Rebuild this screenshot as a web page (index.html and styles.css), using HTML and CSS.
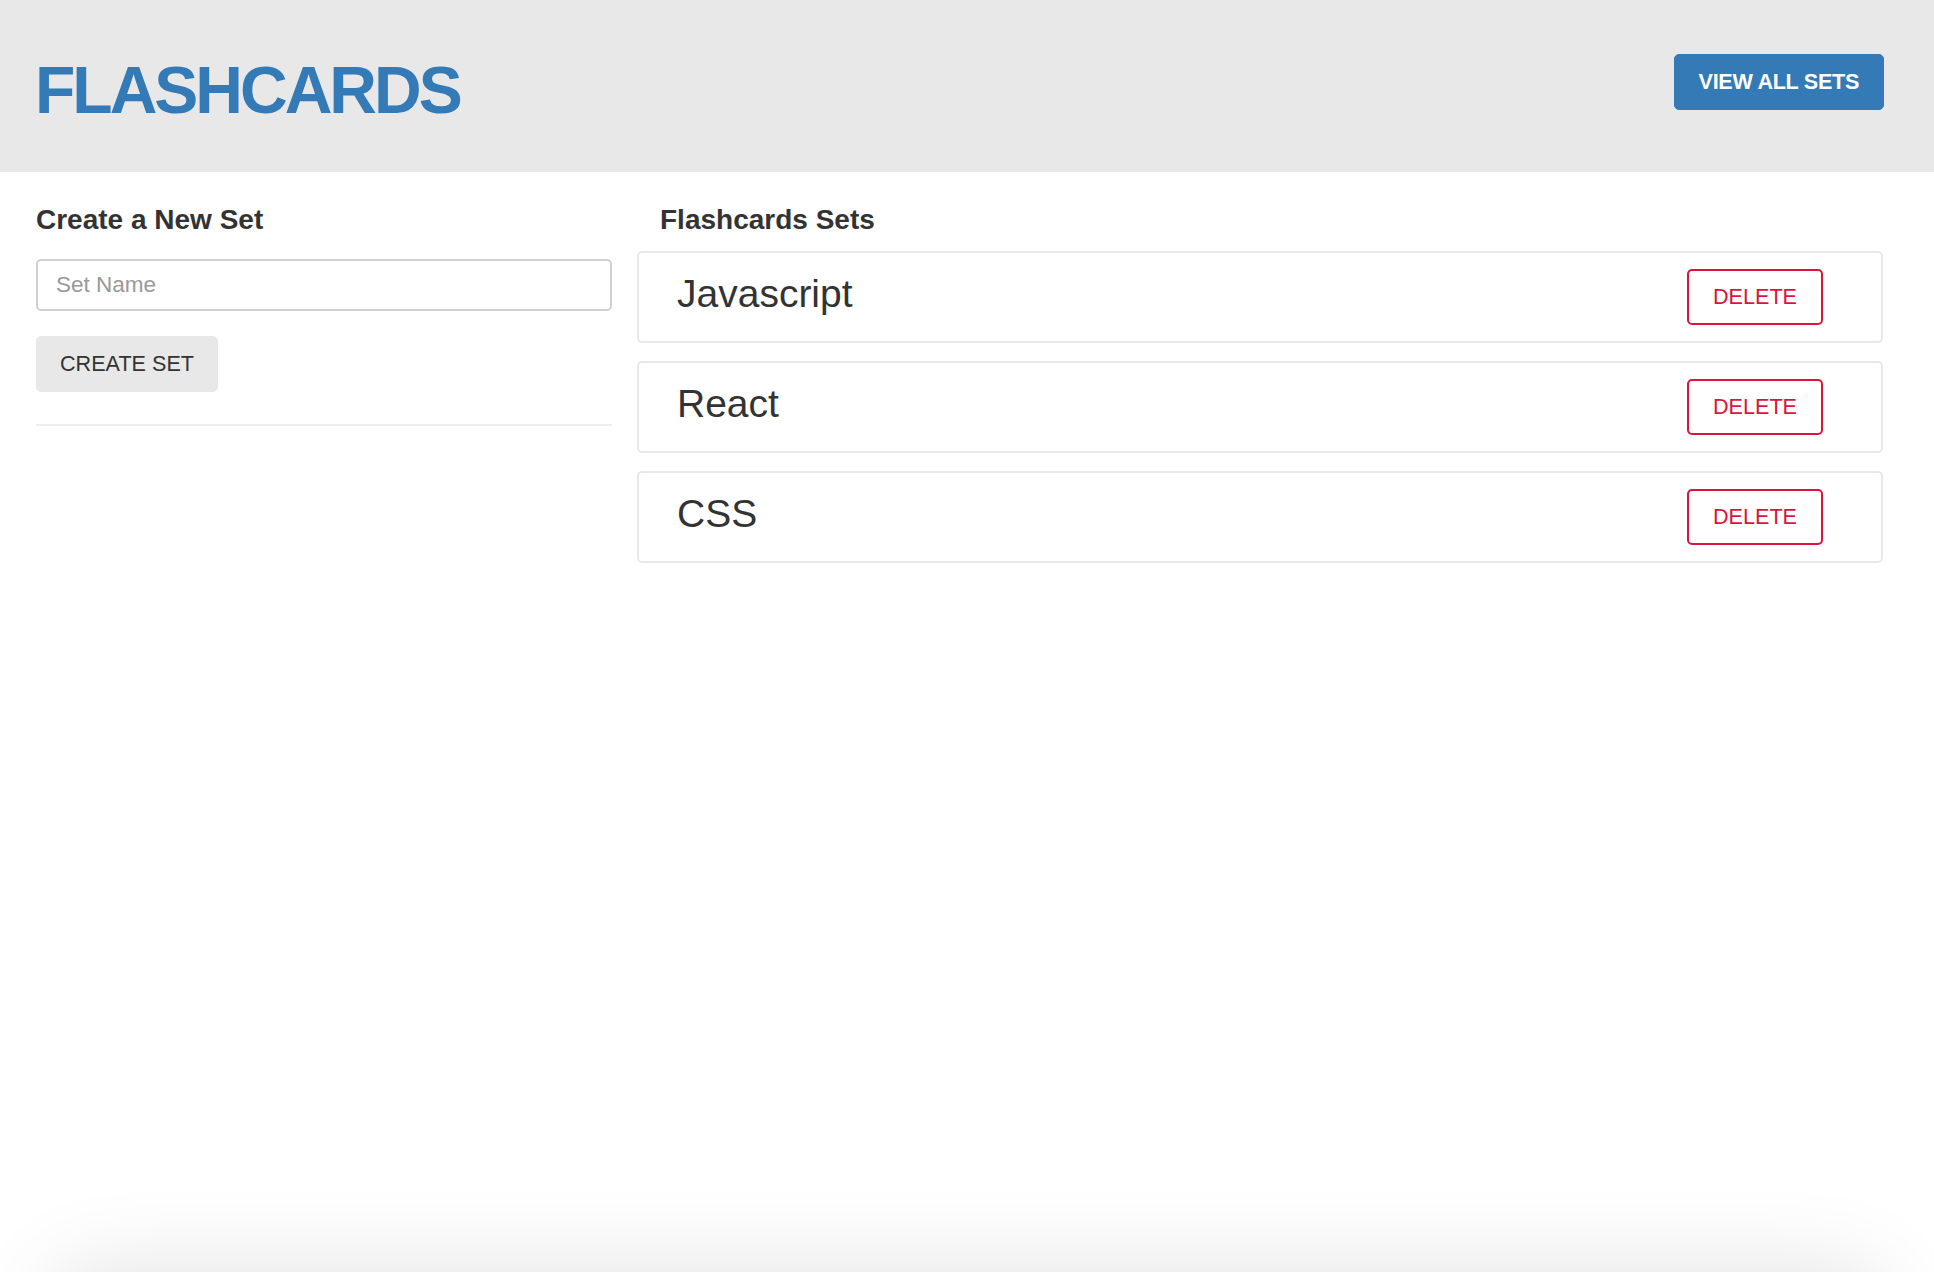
FILE: index.html
```html
<!DOCTYPE html>
<html lang="en">
<head>
<meta charset="utf-8">
<title>Flashcards</title>
<link rel="stylesheet" href="styles.css">
</head>
<body>
<header class="topbar">
  <h1 class="brand">FLASHCARDS</h1>
  <button class="btn btn-primary" type="button">VIEW ALL SETS</button>
</header>
<main class="layout">
  <section class="create">
    <h3 class="section-title create-title">Create a New Set</h3>
    <input class="field" type="text" placeholder="Set Name">
    <button class="btn btn-default" type="button">CREATE SET</button>
    <hr class="divider">
  </section>
  <section class="sets">
    <h3 class="section-title sets-title">Flashcards Sets</h3>
    <ul class="set-list">
      <li class="set-card"><h2 class="set-name">Javascript</h2><button class="btn btn-delete" type="button">DELETE</button></li>
      <li class="set-card"><h2 class="set-name">React</h2><button class="btn btn-delete" type="button">DELETE</button></li>
      <li class="set-card"><h2 class="set-name">CSS</h2><button class="btn btn-delete" type="button">DELETE</button></li>
    </ul>
  </section>
</main>
<div class="page-shadow"></div>
</body>
</html>
```
FILE: styles.css
```css
html, body {
  margin: 0;
  background: #fff;
}
body {
  font-family: "Liberation Sans", Arial, Helvetica, sans-serif;
  color: #333;
}

.topbar {
  height: 172px;
  box-sizing: border-box;
  background: #e8e8e8;
  display: flex;
  justify-content: space-between;
  align-items: flex-start;
  padding: 54px 50px 0 35px;
}
.brand {
  margin: 3px 0 0;
  font-size: 66px;
  line-height: 66px;
  font-weight: bold;
  letter-spacing: -3px;
  color: #337ab7;
}

.btn {
  font-family: inherit;
  font-size: 21.6px;
  height: 56px;
  box-sizing: border-box;
  border: 1px solid transparent;
  border-radius: 5px;
  padding: 0 25px;
  cursor: pointer;
  white-space: nowrap;
}
.btn-primary {
  background: #337ab7;
  border-color: #337ab7;
  color: #fff;
  font-weight: bold;
  letter-spacing: -0.3px;
  padding: 0 24px;
}
.btn-default {
  display: block;
  margin-top: 25px;
  padding: 0 23px;
  background: #e8e8e8;
  border-color: #e8e8e8;
  color: #333;
}
.btn-delete {
  background: #fff;
  color: #dc143c;
  border: 2px solid #dc143c;
  padding: 0 24px;
}

.layout {
  display: grid;
  grid-template-columns: 576px 1fr;
  column-gap: 25px;
  padding: 31px 51px 0 36px;
}

.section-title {
  margin: 0;
  font-size: 28px;
  line-height: 34px;
  font-weight: bold;
  color: #333;
}
.create-title {
  margin-bottom: 22px;
}
.sets-title {
  padding-left: 23px;
}

.field {
  display: block;
  width: 100%;
  box-sizing: border-box;
  height: 52px;
  border: 2px solid #d0d0d0;
  border-radius: 5px;
  padding: 0 18px;
  font-family: inherit;
  font-size: 22.5px;
  color: #555;
  outline: none;
}
.field::placeholder {
  color: #999;
}

.divider {
  margin: 32px 0 0;
  border: 0;
  border-top: 2px solid #eee;
}

.set-list {
  list-style: none;
  margin: 14px 0 0;
  padding: 0;
  display: flex;
  flex-direction: column;
  gap: 18px;
}
.set-card {
  height: 92px;
  box-sizing: border-box;
  border: 2px solid #e8e8e8;
  border-radius: 5px;
  display: flex;
  align-items: center;
  justify-content: space-between;
  padding: 0 58px 0 38px;
}
.set-name {
  margin: 0 0 5px;
  font-size: 39px;
  line-height: 1.2;
  font-weight: normal;
  color: #333;
}

.page-shadow {
  position: fixed;
  left: 50px;
  right: 50px;
  top: 100%;
  height: 200px;
  border-radius: 40px;
  box-shadow: 0 0 90px rgba(0, 0, 0, 0.12);
  pointer-events: none;
}
```
